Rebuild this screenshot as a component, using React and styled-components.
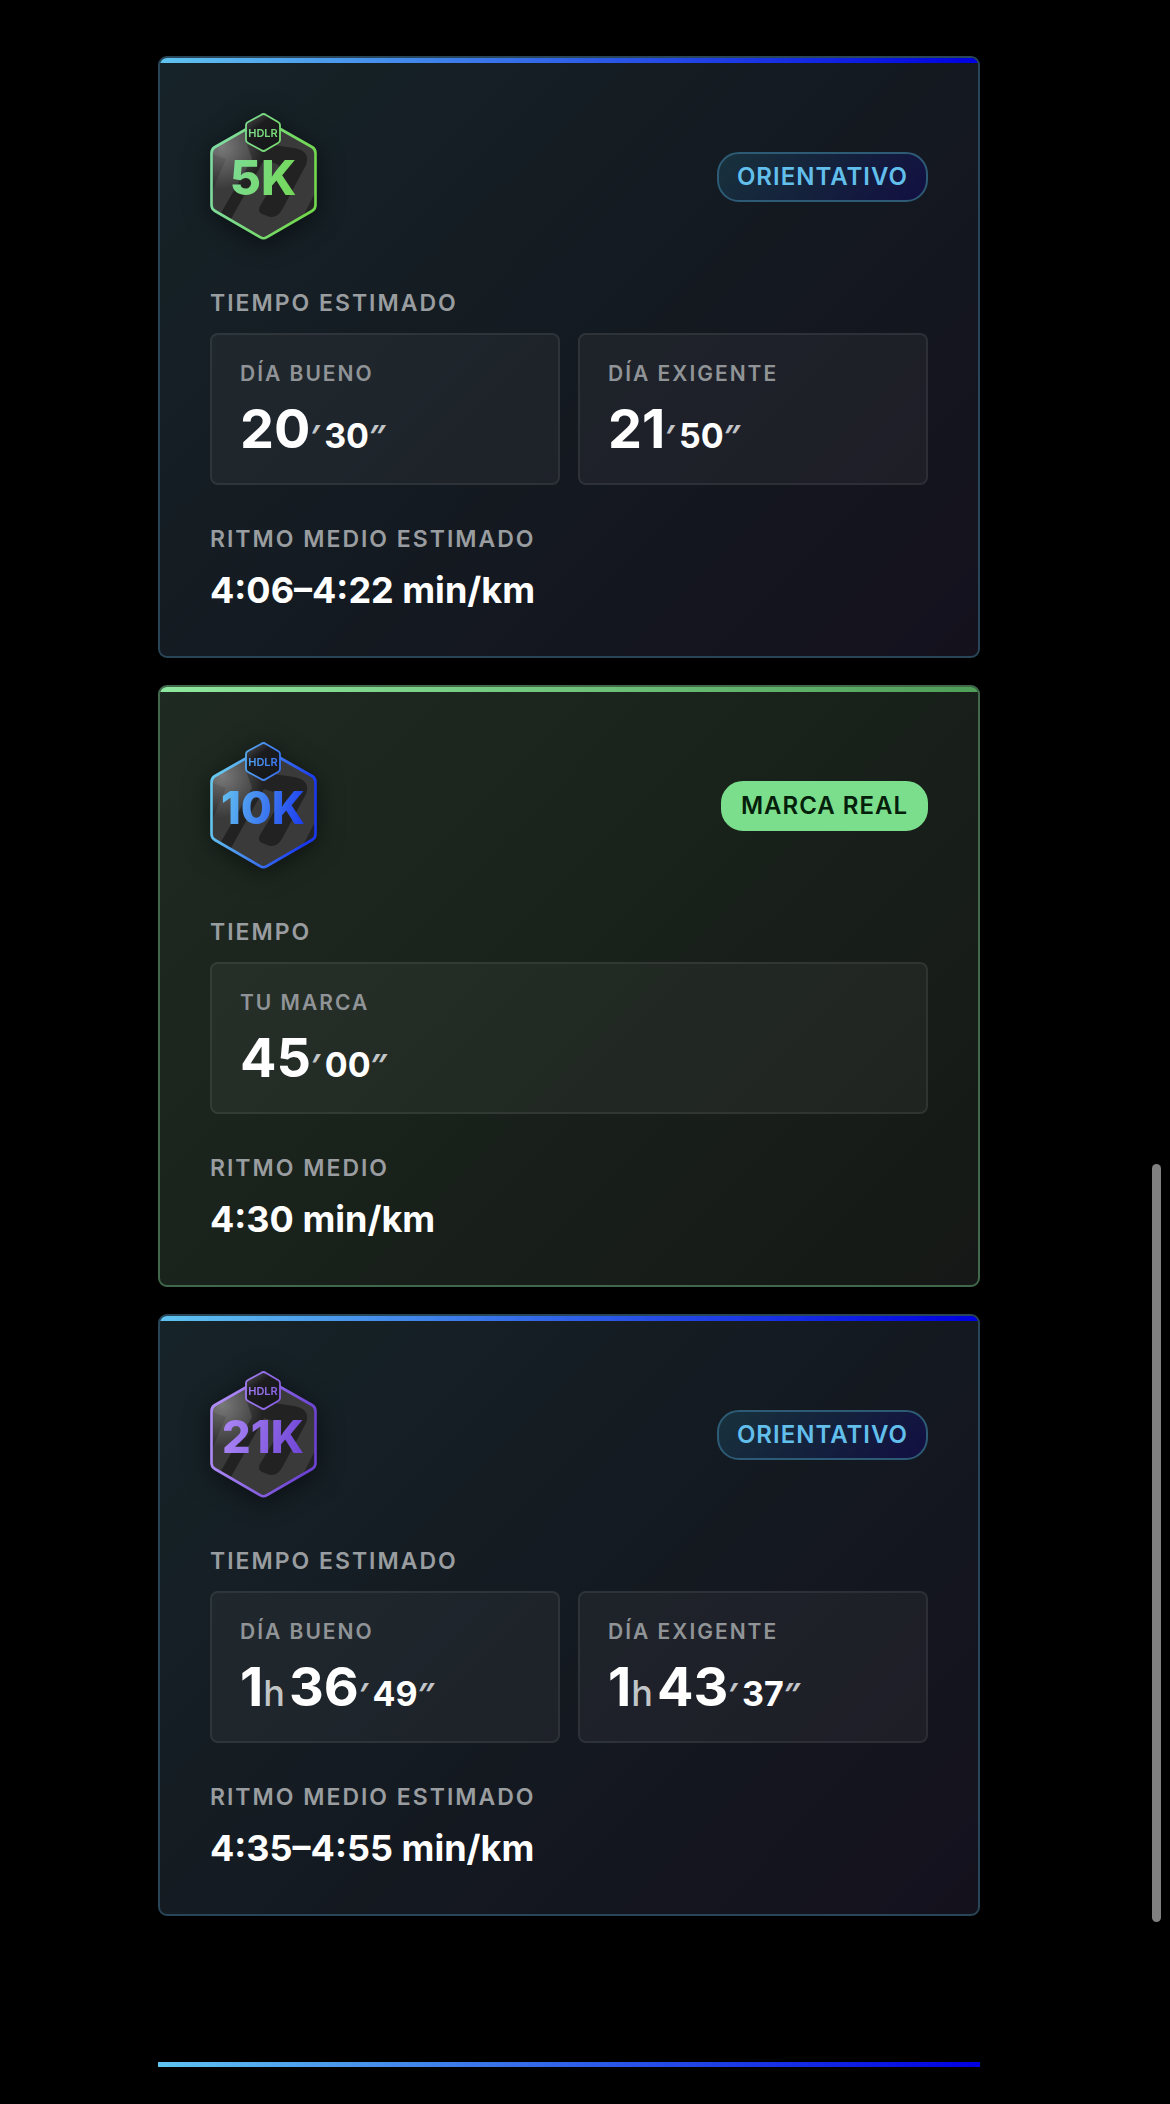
import styled, { createGlobalStyle, css } from "styled-components";

const races = [
  {
    name: "5K",
    status: "ORIENTATIVO",
    timeLabel: "TIEMPO ESTIMADO",
    times: [
      { label: "DÍA BUENO", minutes: "20", seconds: "30" },
      { label: "DÍA EXIGENTE", minutes: "21", seconds: "50" },
    ],
    paceLabel: "RITMO MEDIO ESTIMADO",
    pace: "4:06–4:22 min/km",
    colors: ["#7fdca0", "#72d84e"],
    numberSize: 48,
  },
  {
    name: "10K",
    real: true,
    status: "MARCA REAL",
    timeLabel: "TIEMPO",
    times: [{ label: "TU MARCA", minutes: "45", seconds: "00" }],
    paceLabel: "RITMO MEDIO",
    pace: "4:30 min/km",
    colors: ["#66c8f0", "#1a38f0"],
    numberSize: 45,
  },
  {
    name: "21K",
    status: "ORIENTATIVO",
    timeLabel: "TIEMPO ESTIMADO",
    times: [
      { label: "DÍA BUENO", hours: "1", minutes: "36", seconds: "49" },
      { label: "DÍA EXIGENTE", hours: "1", minutes: "43", seconds: "37" },
    ],
    paceLabel: "RITMO MEDIO ESTIMADO",
    pace: "4:35–4:55 min/km",
    colors: ["#b08cf8", "#6c42d4"],
    numberSize: 45,
  },
];

function Badge({ name, colors, numberSize }) {
  const line = `url(#line-${name})`;
  const outer =
    "M58 9 L102 34 Q105.500 36 105.500 40 L105.500 92 Q105.500 96 102 98 L57 124 Q53.500 126.500 50 124 L5 98 Q1.500 96 1.500 92 L1.500 40 Q1.500 36 5 34 L49 9 Q53.500 6 58 9 Z";
  return (
    <BadgeSvg viewBox="0 0 107 127" role="img" aria-label={name}>
      <defs>
        <linearGradient id={`line-${name}`} gradientUnits="userSpaceOnUse" x1="6" y1="50" x2="100" y2="70">
          <stop offset="0" stopColor={colors[0]} />
          <stop offset="1" stopColor={colors[1]} />
        </linearGradient>
        <radialGradient id={`shine-${name}`} gradientUnits="userSpaceOnUse" cx="12" cy="34" r="42">
          <stop offset="0" stopColor="#fff" stopOpacity="0.32" />
          <stop offset="1" stopColor="#fff" stopOpacity="0" />
        </radialGradient>
        <linearGradient id={`top-${name}`} x1="0" y1="0" x2="0.7" y2="1">
          <stop offset="0" stopColor="#555558" />
          <stop offset="0.4" stopColor="#1c1c1f" />
          <stop offset="1" stopColor="#151719" />
        </linearGradient>
        <clipPath id={`clip-${name}`}>
          <path d={outer} />
        </clipPath>
      </defs>
      <g clipPath={`url(#clip-${name})`}>
        <rect width="107" height="127" fill="#3a3a3b" />
        <path
          d="M36 28 L84 35 Q101 38 96 52 L73 95 Q68 105 60 104 L52 101 Q47 98 50 93 L70 60 Q73 52 64 50 L54 47 L21 106 L11 100 L42 46 Z"
          fill="#222223"
        />
        <path d="M105 80 L92 105 L107 97 Z" fill="#242425" />
        <path d="M0 40 L16 46 L2 78 Z" fill="#2c2c2d" />
        <rect width="107" height="127" fill={`url(#shine-${name})`} />
      </g>
      <path d={outer} fill="none" stroke={line} strokeWidth="2.6" />
      <path
        d="M56 2 L68 9 Q70 10 70 12 L70 27 Q70 29 68 30 L56 37 Q53.500 39 51 37 L38 30 Q36 29 36 27 L36 12 Q36 10 38 9 L51 2 Q53.500 0 56 2 Z"
        fill={`url(#top-${name})`}
        stroke={line}
        strokeWidth="1.800"
      />
      <BadgeBrand x="53" y="24" fill={line}>HDLR</BadgeBrand>
      <BadgeNumber x="53" y="82" fontSize={numberSize} fill={line}>{name}</BadgeNumber>
    </BadgeSvg>
  );
}

function Time({ hours, minutes, seconds }) {
  return (
    <TimeRow>
      {hours && (
        <>
          <Main>{hours}</Main>
          <Hour>h</Hour>
        </>
      )}
      <Main>{minutes}</Main>
      <Mark $spaced>′</Mark>
      <Seconds>{seconds}</Seconds>
      <Mark>″</Mark>
    </TimeRow>
  );
}

export default function App() {
  return (
    <>
      <GlobalStyle />
      <Page>
        <Cards>
          {races.map((race) => (
            <Card key={race.name} $real={race.real}>
              <Header>
                <Badge {...race} />
                <Status $real={race.real}>{race.status}</Status>
              </Header>
              <Label>{race.timeLabel}</Label>
              <Times>
                {race.times.map((time) => (
                  <TimeBox key={time.label}>
                    <TimeLabel>{time.label}</TimeLabel>
                    <Time {...time} />
                  </TimeBox>
                ))}
              </Times>
              <Label>{race.paceLabel}</Label>
              <Pace>{race.pace}</Pace>
            </Card>
          ))}
        </Cards>
        <Divider />
      </Page>
      <ScrollThumb />
    </>
  );
}

const GlobalStyle = createGlobalStyle`
  * {
    box-sizing: border-box;
  }
  body {
    margin: 0;
    background: #000;
    color: #fff;
    font-family: Inter, "Noto Sans", sans-serif;
  }
  h2, p {
    margin: 0;
  }
`;

const Page = styled.main`
  padding: 56px 190px 37px 158px;
`;

const Cards = styled.div`
  display: flex;
  flex-direction: column;
  gap: 27px;
`;

const Card = styled.article`
  position: relative;
  overflow: hidden;
  padding: 55px 50px 43px;
  border: 2px solid ${({ $real }) => ($real ? "#41684b" : "#284658")};
  border-radius: 9px;
  background: ${({ $real }) =>
    $real
      ? "linear-gradient(135deg, #1f2a22, #19211b 50%, #151816)"
      : "linear-gradient(135deg, #162328, #141a21 50%, #14111d)"};

  &::before {
    content: "";
    position: absolute;
    top: 0;
    left: 0;
    right: 0;
    height: 5px;
    background: ${({ $real }) =>
      $real
        ? "linear-gradient(90deg, #8fe89f, #509f58)"
        : "linear-gradient(90deg, #5fc3f0, #0000e0)"};
  }
`;

const Header = styled.header`
  display: flex;
  align-items: center;
  justify-content: space-between;
  margin-bottom: 48px;
`;

const BadgeSvg = styled.svg`
  display: block;
  width: 107px;
  height: 127px;
  filter: drop-shadow(0 4px 12px rgba(0, 0, 0, 0.5));
`;

const BadgeBrand = styled.text`
  font-family: "Liberation Sans Narrow", Inter, sans-serif;
  font-size: 11px;
  font-weight: 600;
  text-anchor: middle;
`;

const BadgeNumber = styled.text`
  font-weight: 800;
  text-anchor: middle;
`;

const Status = styled.span`
  padding: 8px 18px;
  border: 2px solid #2d5a74;
  border-radius: 22px;
  background: linear-gradient(135deg, #18323c, #14213c 50%, #120f42);
  color: #62bfec;
  font-size: 24px;
  line-height: 30px;
  font-weight: 600;
  letter-spacing: 1px;
  ${({ $real }) =>
    $real &&
    css`
      border-color: #7bde8c;
      background: #7bde8c;
      color: #04200b;
    `}
`;

const Label = styled.h2`
  color: #999da0;
  font-size: 23px;
  line-height: 30px;
  font-weight: 600;
  letter-spacing: 2px;
`;

const Times = styled.div`
  display: grid;
  grid-auto-flow: column;
  grid-auto-columns: 1fr;
  gap: 18px;
  margin: 15px 0 39px;
`;

const TimeBox = styled.section`
  padding: 25px 28px;
  border: 2px solid rgba(255, 255, 255, 0.11);
  border-radius: 8px;
  background: rgba(255, 255, 255, 0.045);
  background-clip: padding-box;
`;

const TimeLabel = styled.p`
  margin-bottom: 12px;
  color: #909497;
  font-size: 21px;
  line-height: 28px;
  font-weight: 600;
  letter-spacing: 2px;
`;

const TimeRow = styled.p`
  display: flex;
  align-items: baseline;
  height: 58px;
  line-height: 58px;
`;

const Main = styled.span`
  font-size: 54px;
  font-weight: 700;
`;

const Hour = styled.span`
  margin-right: 4px;
  color: #c2c5c8;
  font-size: 36px;
  font-weight: 500;
`;

const Mark = styled.span`
  margin-right: ${({ $spaced }) => ($spaced ? "4px" : "0")};
  color: #c2c5c8;
  font-family: "Open Sans", Inter, sans-serif;
  font-size: 32px;
  font-weight: 700;
`;

const Seconds = styled.span`
  font-size: 34px;
  font-weight: 700;
`;

const Pace = styled.p`
  margin-top: 13px;
  font-size: 36px;
  line-height: 46px;
  font-weight: 700;
`;

const Divider = styled.hr`
  height: 5px;
  margin: 146px 0 0;
  border: 0;
  background: linear-gradient(90deg, #5fc3f0, #0000e0);
`;

const ScrollThumb = styled.div`
  position: fixed;
  top: 1164px;
  right: 9px;
  width: 9px;
  height: 758px;
  border-radius: 5px;
  background: #808080;
`;
